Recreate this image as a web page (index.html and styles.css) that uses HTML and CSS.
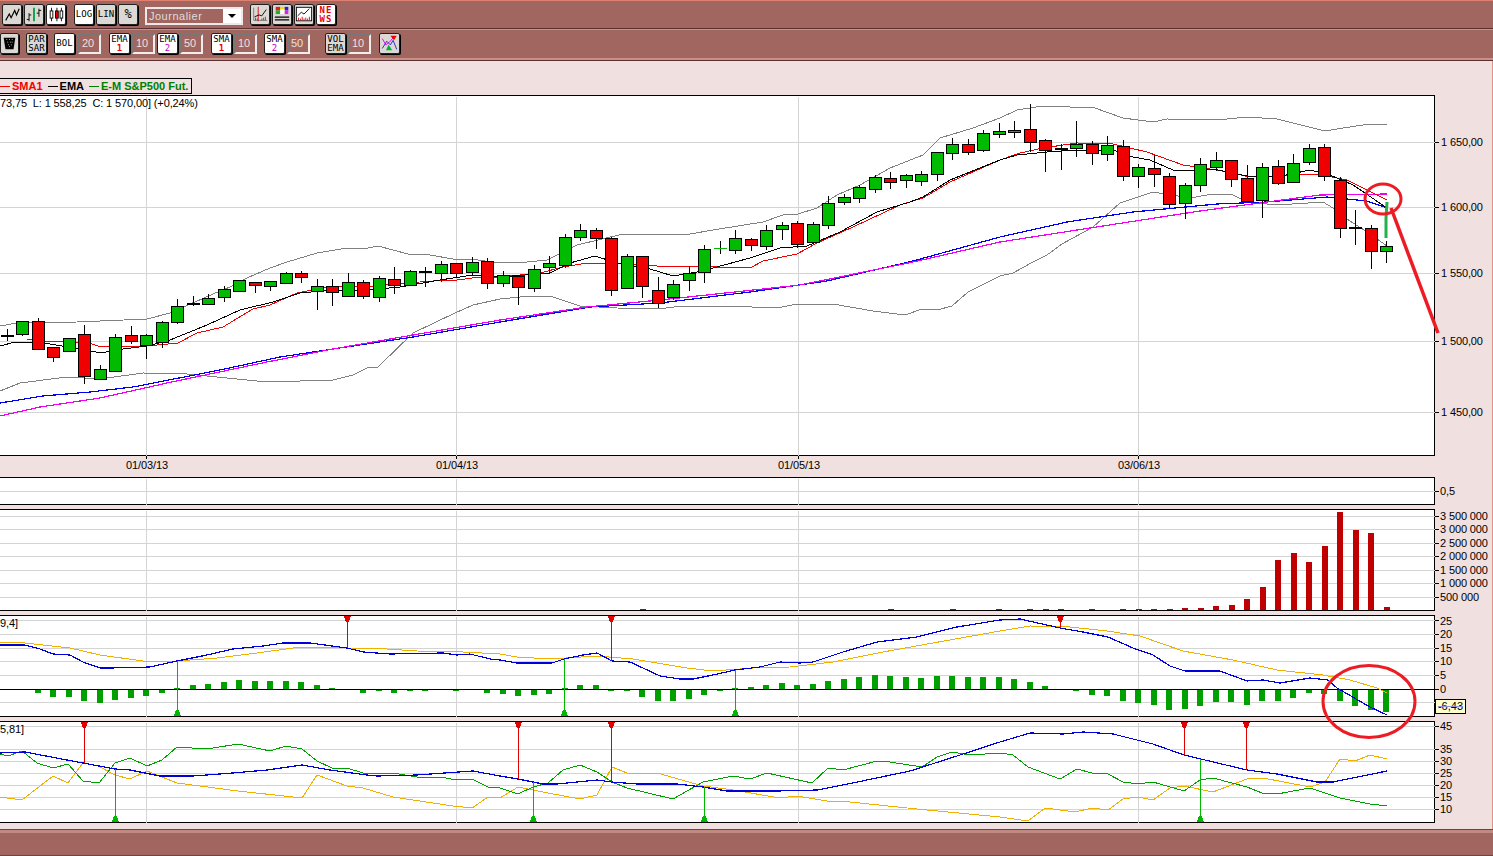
FILE: index.html
```html
<!doctype html>
<html lang="fr">
  <head>
    <meta charset="UTF-8" />
    <meta name="viewport" content="width=device-width, initial-scale=1.0" />
    <title>Graphique S&amp;P500 Fut.</title>
    <link rel="stylesheet" href="styles.css">
  </head>
  <body>
    <div id="app" class="window">
      <header class="toolbar">
        <div class="tool-row row-top">
          <div class="tool-group">
            <button class="btn grey"><svg viewBox="0 0 20 21"><polyline points="3,17 7,10 9,14 13,6 15,11 18,4" fill="none" stroke="#000" stroke-width="1.3"/></svg></button>
            <button class="btn grey"><svg viewBox="0 0 20 21"><path d="M4.5 9v9M2 16h2.5M4.5 11H7M15.5 4v9M13 9h2.5M15.5 6H18" stroke="#000" fill="none"/><rect x="9" y="3" width="2" height="15" fill="#00a040"/></svg></button>
            <button class="btn"><svg viewBox="0 0 20 21"><path d="M5 3v15M11 3v15M16 3v15" stroke="#000"/><rect x="3.5" y="6.5" width="3" height="8" fill="#fff" stroke="#000"/><rect x="9.5" y="6.5" width="3" height="8" fill="#f00000" stroke="#000"/><rect x="14.5" y="6.5" width="3" height="8" fill="#fff" stroke="#000"/></svg></button>
          </div>
          <div class="tool-group gap-b">
            <button class="btn">LOG</button>
            <button class="btn grey">LIN</button>
            <button class="btn grey pct">%</button>
          </div>
          <div class="period gap-s">
            <span class="period-value">Journalier</span>
            <span class="period-arrow"></span>
          </div>
          <div class="tool-group gap-s">
            <button class="btn grey"><svg viewBox="0 0 20 21"><path d="M3 17h15M3 3v14" stroke="#777" fill="none"/><path d="M8 2v16" stroke="#e00000"/><polyline points="4,13 9,11 12,12 17,5" fill="none" stroke="#000"/><path d="M5 17v-3M7 17v-2M12 17v-2M14 17v-3M16 17v-4" stroke="#555"/></svg></button>
            <button class="btn grey"><svg viewBox="0 0 20 21"><rect x="3" y="2" width="5" height="4" fill="#e02020"/><rect x="8" y="2" width="5" height="3" fill="#f0e000"/><rect x="13" y="2" width="4" height="4" fill="#2020e0"/><rect x="3" y="6" width="5" height="4" fill="#20b020"/><rect x="8" y="5" width="5" height="5" fill="#fff"/><rect x="13" y="6" width="4" height="4" fill="#e020e0"/><path d="M2 13.5h16M2 16.5h16" stroke="#000" stroke-width="1.4"/></svg></button>
            <button class="btn grey"><svg viewBox="0 0 20 21"><rect x="1.5" y="2.5" width="17" height="15" fill="#fff" stroke="#000"/><polyline points="3,12 7,8 10,10 16,4" fill="none" stroke="#000"/><path d="M4 17v-3M6 17v-2M8 17v-4M10 17v-2M12 17v-3M14 17v-2M16 17v-4" stroke="#e00000"/></svg></button>
            <button class="btn news"><span>NE</span><span>WS</span></button>
          </div>
        </div>
        <div class="tool-row row-bottom">
          <button class="btn grey narrow"><svg viewBox="0 0 19 21"><path d="M3 4h13l-2 13H5z" fill="#000"/><path d="M6 6h1M9 6h1M12 6h1M7 9h1M10 9h1M12 9h1M8 12h1M11 12h1M9 14h1" stroke="#ccc"/></svg></button>
          <button class="btn grey gap-s">PAR<br>SAR</button>
          <div class="tool-group wide gap-s">
            <button class="btn">BOL</button>
            <span class="num">20</span>
          </div>
          <div class="tool-group gap-b">
            <button class="btn">EMA<br><b class="c-red">1</b></button>
            <span class="num">10</span>
            <button class="btn">EMA<br><b class="c-pur">2</b></button>
            <span class="num">50</span>
          </div>
          <div class="tool-group gap-b">
            <button class="btn">SMA<br><b class="c-red">1</b></button>
            <span class="num">10</span>
          </div>
          <div class="tool-group gap-s">
            <button class="btn">SMA<br><b class="c-pur">2</b></button>
            <span class="num">50</span>
          </div>
          <div class="tool-group gap-x">
            <button class="btn grey">VOL<br>EMA</button>
            <span class="num">10</span>
          </div>
          <button class="btn grey gap-b"><svg viewBox="0 0 20 21"><polyline points="2,5 6,12 10,9 15,3" fill="none" stroke="#e000e0"/><polyline points="2,16 7,8 11,12 14,7 18,17" fill="none" stroke="#2020d0"/><polygon points="11,2 18,2 15,7" fill="#f00000"/><polygon points="6,18 13,18 9,12" fill="#00b040"/></svg></button>
        </div>
      </header>

      <main class="workspace">
        <div class="legend">
          <i class="dash first c-red-bg"></i><span class="c-red">SMA1</span>
          <i class="dash"></i><span>EMA</span>
          <i class="dash c-grn-bg"></i><span class="c-grn">E-M S&amp;P500 Fut.</span>
        </div>

        <svg id="pricePane" class="pane" width="1493" height="382" viewBox="0 95 1493 382">
          <g class="plot"></g>
          <text class="info" x="0" y="107">73,75  L: 1 558,25  C: 1 570,00] (+0,24%)</text>
          <text class="axis" x="1441" y="146">1 650,00</text>
          <text class="axis" x="1441" y="211">1 600,00</text>
          <text class="axis" x="1441" y="277">1 550,00</text>
          <text class="axis" x="1441" y="345">1 500,00</text>
          <text class="axis" x="1441" y="416">1 450,00</text>
          <text class="date" x="147" y="469">01/03/13</text>
          <text class="date" x="457" y="469">01/04/13</text>
          <text class="date" x="799" y="469">01/05/13</text>
          <text class="date" x="1139" y="469">03/06/13</text>
        </svg>

        <svg id="emptyPane" class="pane" width="1493" height="28" viewBox="0 477 1493 28">
          <g class="plot"></g>
          <text class="axis" x="1440" y="495">0,5</text>
        </svg>

        <svg id="volumePane" class="pane" width="1493" height="102" viewBox="0 509 1493 102">
          <g class="plot"></g>
          <text class="axis" x="1440" y="520">3 500 000</text>
          <text class="axis" x="1440" y="533">3 000 000</text>
          <text class="axis" x="1440" y="547">2 500 000</text>
          <text class="axis" x="1440" y="560">2 000 000</text>
          <text class="axis" x="1440" y="574">1 500 000</text>
          <text class="axis" x="1440" y="587">1 000 000</text>
          <text class="axis" x="1440" y="601">500 000</text>
        </svg>

        <svg id="macdPane" class="pane" width="1493" height="102" viewBox="0 615 1493 102">
          <g class="plot"></g>
          <text class="info" x="0" y="627">9,4]</text>
          <text class="axis" x="1440" y="625">25</text>
          <text class="axis" x="1440" y="638">20</text>
          <text class="axis" x="1440" y="652">15</text>
          <text class="axis" x="1440" y="665">10</text>
          <text class="axis" x="1440" y="679">5</text>
          <text class="axis" x="1440" y="693">0</text>
        </svg>

        <svg id="dmiPane" class="pane" width="1493" height="102" viewBox="0 721 1493 102">
          <g class="plot"></g>
          <text class="info" x="0" y="733">5,81]</text>
          <text class="axis" x="1440" y="730">45</text>
          <text class="axis" x="1440" y="753">35</text>
          <text class="axis" x="1440" y="765">30</text>
          <text class="axis" x="1440" y="777">25</text>
          <text class="axis" x="1440" y="789">20</text>
          <text class="axis" x="1440" y="801">15</text>
          <text class="axis" x="1440" y="813">10</text>
        </svg>

        <div class="value-tip">-6,43</div>
      </main>

      <footer class="statusbar"></footer>

      <!-- hand drawn marks on top of the chart -->
      <svg class="marks" width="1493" height="856" viewBox="0 0 1493 856">
        <polyline points="1386,238 1386,218 1387,202" fill="none" stroke="#22b14c" stroke-width="3"/>
        <ellipse cx="1383" cy="199" rx="18" ry="15" fill="none" stroke="#ed1c24" stroke-width="3"/>
        <line x1="1391" y1="208" x2="1438" y2="333" stroke="#ed1c24" stroke-width="3.5"/>
        <ellipse cx="1369" cy="701.5" rx="46" ry="36" fill="none" stroke="#ed1c24" stroke-width="3"/>
      </svg>
    </div>
    <script src="chart.js"></script>
  </body>
</html>
```

FILE: styles.css
```css
* {
  box-sizing: border-box;
}
html,
body {
  margin: 0;
  padding: 0;
  overflow: hidden;
}
.window {
  position: relative;
  width: 1493px;
  height: 856px;
  font-family: "Liberation Sans", Arial, sans-serif;
  background-color: #f0e0e0;
}

/* toolbars */
.toolbar {
  height: 61px;
  background-color: #a0665f;
  border-top: 1px solid #e08070;
  border-bottom: 1px solid #5a3030;
}
.tool-row {
  display: flex;
  align-items: center;
}
.row-top {
  height: 28px;
  padding: 1px 0 1px 2px;
  border-bottom: 1px solid #5a3030;
}
.row-bottom {
  height: 31px;
  padding-bottom: 1px;
  border-top: 1px solid #c89088;
  border-bottom: 2px solid #c89088;
}
.tool-group {
  display: flex;
  align-items: center;
  gap: 2px;
}
.tool-group.wide {
  gap: 3px;
}
.gap-s {
  margin-left: 7px;
}
.gap-b {
  margin-left: 8px;
}
.gap-x {
  margin-left: 15px;
}
.btn {
  width: 20px;
  height: 21px;
  padding: 0;
  border: 1px solid #222;
  border-radius: 2px;
  background-color: #fff;
  box-shadow: 1px 1px 0 #000;
  font-family: "DejaVu Sans Mono", "Liberation Mono", monospace;
  font-size: 9px;
  line-height: 9px;
  color: #000;
  text-align: center;
  overflow: hidden;
}
.btn svg {
  display: block;
  width: 100%;
  height: 100%;
}
.btn.grey {
  background-color: #dcd8d4;
}
.btn.narrow {
  width: 19px;
}
.btn.pct {
  font-size: 12px;
}
.btn b.c-pur {
  font-weight: normal;
}
.news {
  display: flex;
  flex-direction: column;
  justify-content: center;
  font-size: 9px;
  font-weight: bold;
  color: #f00000;
  letter-spacing: 1px;
}
.row-bottom .btn {
  width: 21px;
}
.row-bottom .btn.narrow {
  width: 19px;
}
.num {
  width: 23px;
  height: 20px;
  padding-left: 2px;
  border: 2px solid;
  border-color: #777 #eee #eee #777;
  font-size: 11px;
  line-height: 15px;
  color: #eee0dc;
}
.period {
  display: flex;
  align-items: center;
  justify-content: space-between;
  width: 98px;
  height: 18px;
  margin-top: 2px;
  border: 2px solid #f0e8e8;
  background-color: #fff;
}
.period-value {
  flex: 1;
  height: 100%;
  padding-left: 2px;
  background-color: #a0665f;
  font-size: 11px;
  line-height: 14px;
  color: #ddd;
  letter-spacing: 0.5px;
}
.period-arrow {
  width: 18px;
  height: 14px;
  position: relative;
}
.period-arrow::after {
  content: "";
  position: absolute;
  left: 5px;
  top: 5px;
  border-left: 4px solid transparent;
  border-right: 4px solid transparent;
  border-top: 4px solid #000;
}

/* chart area */
.workspace {
  position: relative;
  height: 768px;
  padding-top: 17px;
  border-right: 1px solid #e09088;
}
.legend {
  display: flex;
  align-items: center;
  width: 192px;
  height: 16px;
  margin-bottom: 1px;
  border: 1px solid #000;
  border-left: none;
  font-size: 11px;
  font-weight: bold;
  line-height: 14px;
  white-space: nowrap;
}
.dash {
  display: block;
  width: 10px;
  height: 1px;
  margin: 0 2px 0 5px;
  background-color: #000;
}
.dash.first {
  margin-left: 0;
}
.c-red {
  color: #f00000;
}
.c-pur {
  color: #c000c0;
}
.c-grn {
  color: #008000;
}
.c-red-bg {
  background-color: #f00000;
}
.c-grn-bg {
  background-color: #008000;
}
.pane {
  display: block;
  margin-bottom: 4px;
}
#pricePane {
  margin-bottom: 0;
}
.pane .plot {
  shape-rendering: crispEdges;
}
.pane text {
  font-family: "Liberation Sans", Arial, sans-serif;
  font-size: 11px;
  letter-spacing: -0.12px;
  fill: #000;
  white-space: pre;
}
.pane .date {
  text-anchor: middle;
}
.value-tip {
  position: absolute;
  left: 1435px;
  top: 638px;
  width: 31px;
  height: 15px;
  border: 1px solid #000;
  background-color: #ffffcc;
  font-size: 11px;
  line-height: 13px;
  text-align: center;
  text-decoration: line-through #9090e0;
}
.statusbar {
  height: 27px;
  background-color: #a0665f;
  border-top: 1px solid #6e443e;
  border-bottom: 1px solid #6e443e;
  box-shadow: inset 0 3px 0 #c08a82;
}
.marks {
  position: absolute;
  left: 0;
  top: 0;
  pointer-events: none;
}
```

FILE: chart.js
```js
// pixel data read off the chart, drawn in page coordinates
const NS = "http://www.w3.org/2000/svg";
const AXIS_X = 1434.5;
const DATE_X = [146.5, 456.5, 798.5, 1138.5];
const barX = (k) => Math.floor(146.5 + 15.5 * k);

// high, body top, body bottom, low, type - first one is k = -9
const candles = [
  [329, 336, 336, 341, "d"], [321, 321, 334, 336, "g"], [318, 321, 349, 349, "r"],
  [347, 347, 357, 362, "r"], [338, 338, 351, 351, "g"], [325, 334, 376, 384, "r"],
  [365, 369, 379, 379, "g"], [334, 337, 371, 371, "g"], [326, 335, 341, 344, "r"],
  [334, 335, 345, 359, "g"], [321, 322, 342, 348, "g"], [299, 306, 322, 324, "g"],
  [296, 304, 304, 306, "d"], [294, 298, 304, 304, "g"], [286, 289, 297, 302, "g"],
  [280, 280, 291, 291, "g"], [282, 282, 285, 293, "r"], [281, 281, 286, 291, "g"],
  [272, 273, 283, 283, "g"], [271, 273, 277, 283, "r"], [279, 286, 291, 310, "g"],
  [279, 286, 292, 306, "r"], [273, 282, 296, 297, "g"], [280, 282, 296, 299, "r"],
  [276, 278, 297, 302, "g"], [267, 279, 285, 294, "r"], [270, 271, 285, 285, "g"],
  [267, 272, 272, 287, "d"], [261, 264, 273, 282, "g"], [263, 263, 273, 278, "r"],
  [257, 262, 272, 275, "g"], [258, 261, 283, 289, "r"], [271, 275, 283, 287, "g"],
  [276, 276, 287, 305, "r"], [265, 269, 288, 292, "g"], [256, 263, 267, 274, "g"],
  [234, 237, 265, 268, "g"], [224, 230, 237, 241, "g"], [228, 230, 238, 249, "r"],
  [237, 238, 290, 296, "r"], [254, 256, 288, 288, "g"], [256, 256, 286, 298, "r"],
  [277, 290, 303, 308, "r"], [280, 284, 297, 300, "g"], [266, 273, 280, 291, "g"],
  [245, 249, 272, 283, "g"], [241, 249, 249, 254, "e"], [230, 238, 250, 254, "g"],
  [238, 239, 245, 251, "r"], [225, 230, 246, 250, "g"], [222, 225, 229, 240, "g"],
  [221, 223, 244, 248, "r"], [222, 224, 242, 242, "g"], [196, 203, 225, 229, "g"],
  [194, 197, 202, 205, "g"], [185, 187, 198, 203, "g"], [175, 177, 189, 193, "g"],
  [172, 178, 182, 189, "r"], [174, 175, 180, 188, "g"], [171, 174, 181, 186, "g"],
  [152, 152, 174, 181, "g"], [138, 144, 153, 160, "g"], [139, 144, 152, 155, "r"],
  [130, 133, 150, 152, "g"], [123, 131, 134, 138, "g"], [121, 130, 132, 138, "g"],
  [104, 129, 142, 152, "r"], [139, 140, 150, 172, "r"], [144, 149, 149, 170, "d"],
  [121, 144, 148, 157, "g"], [141, 144, 153, 165, "r"], [136, 145, 154, 161, "g"],
  [140, 146, 176, 181, "r"], [164, 167, 176, 188, "g"], [155, 168, 174, 187, "r"],
  [173, 176, 204, 208, "r"], [183, 185, 203, 219, "g"], [158, 164, 185, 192, "g"],
  [152, 160, 167, 171, "g"], [160, 160, 179, 187, "r"], [165, 178, 201, 202, "r"],
  [163, 167, 200, 218, "g"], [160, 166, 183, 185, "r"], [154, 163, 182, 183, "g"],
  [144, 148, 162, 165, "g"], [144, 147, 176, 181, "r"], [177, 180, 228, 238, "r"],
  [210, 228, 228, 245, "d"], [225, 228, 251, 269, "r"], [241, 246, 251, 263, "g"],
];

const upperBand = [[0, 326], [17, 323], [77, 322], [147, 319], [170, 313], [213, 294], [230, 287], [247, 278], [270, 268], [287, 262], [317, 253], [347, 248], [363, 249], [378, 246], [408, 254], [430, 255], [453, 259], [470, 259], [493, 262], [517, 263], [547, 260], [577, 245], [623, 234], [690, 234], [713, 230], [763, 222], [783, 215], [798, 214], [817, 208], [837, 195], [860, 185], [890, 168], [923, 155], [940, 138], [973, 128], [1000, 118], [1017, 110], [1043, 106], [1070, 107], [1092, 107], [1123, 118], [1153, 122], [1167, 119], [1217, 120], [1247, 117], [1277, 119], [1325, 131], [1343, 128], [1370, 124], [1387, 125]];
const lowerBand = [[0, 391], [20, 383], [67, 377], [100, 379], [143, 373], [187, 374], [267, 382], [333, 380], [353, 375], [367, 368], [378, 367], [413, 333], [455, 313], [473, 305], [500, 299], [520, 297], [550, 296], [580, 306], [617, 308], [657, 309], [683, 306], [727, 306], [777, 308], [797, 304], [833, 304], [873, 311], [905, 315], [922, 309], [937, 310], [952, 306], [968, 292], [1000, 276], [1013, 273], [1033, 262], [1047, 255], [1062, 244], [1093, 227], [1120, 203], [1153, 192], [1190, 198], [1213, 194], [1233, 195], [1247, 202], [1277, 205], [1323, 202], [1333, 208], [1347, 219], [1367, 232], [1387, 246]];
const smaLine = [[27, 339], [43, 341], [62, 341], [92, 344], [98, 346], [133, 346], [147, 346], [178, 343], [197, 333], [223, 327], [253, 309], [270, 305], [297, 293], [333, 286], [367, 287], [393, 284], [433, 281], [457, 280], [480, 277], [500, 277], [540, 273], [563, 267], [587, 263], [607, 263], [657, 266], [700, 266], [717, 267], [752, 267], [763, 261], [797, 254], [817, 243], [853, 227], [900, 205], [923, 198], [950, 182], [1000, 160], [1020, 153], [1043, 148], [1077, 143], [1113, 144], [1147, 152], [1183, 165], [1217, 170], [1250, 177], [1277, 176], [1317, 174], [1347, 180], [1367, 190], [1387, 200]];
const emaLine = [[0, 346], [15, 342], [50, 344], [87, 350], [100, 353], [123, 349], [147, 346], [170, 340], [207, 325], [240, 310], [273, 302], [300, 293], [333, 290], [367, 290], [400, 287], [440, 280], [473, 275], [500, 277], [550, 273], [570, 263], [595, 256], [617, 263], [650, 269], [673, 276], [697, 272], [713, 268], [750, 258], [780, 248], [807, 246], [840, 232], [877, 212], [910, 202], [923, 197], [950, 180], [1000, 160], [1017, 155], [1047, 152], [1077, 150], [1113, 150], [1133, 157], [1150, 160], [1173, 170], [1193, 171], [1213, 169], [1247, 176], [1277, 177], [1310, 170], [1330, 175], [1353, 185], [1387, 208]];
const longBlue = [[0, 403], [43, 396], [90, 392], [133, 387], [220, 370], [280, 357], [333, 349], [413, 337], [500, 322], [590, 307], [660, 303], [750, 292], [827, 281], [913, 261], [1000, 237], [1067, 222], [1133, 212], [1217, 204], [1267, 202], [1327, 197], [1347, 199], [1367, 201], [1387, 208]];
const longPink = [[0, 416], [40, 407], [100, 398], [167, 383], [267, 362], [333, 349], [413, 335], [500, 320], [587, 307], [660, 300], [800, 285], [913, 262], [1000, 242], [1090, 228], [1200, 211], [1267, 202], [1320, 195], [1387, 194]];

const volumes = [[643, 609], [891, 609], [953, 609], [999, 609], [1030, 609], [1046, 609], [1061, 609], [1092, 609], [1123, 609], [1139, 609], [1154, 609], [1170, 609], [1185, 608], [1201, 608], [1216, 606], [1232, 605], [1247, 599], [1263, 587], [1278, 560], [1294, 553], [1309, 562], [1325, 546], [1340, 512], [1356, 530], [1371, 533], [1387, 607]];

const macdBlue = [[0, 645], [25, 645], [40, 649], [53, 654], [70, 655], [83, 662], [100, 668], [110, 668], [150, 667], [177, 661], [207, 655], [233, 649], [263, 646], [283, 643], [310, 643], [347, 648], [363, 652], [390, 654], [443, 653], [457, 655], [470, 654], [490, 659], [500, 660], [517, 663], [552, 663], [564, 659], [583, 655], [597, 653], [612, 661], [630, 662], [643, 668], [660, 676], [680, 679], [693, 679], [713, 675], [735, 670], [760, 667], [780, 662], [800, 663], [813, 662], [843, 652], [877, 642], [917, 637], [957, 627], [1000, 620], [1020, 619], [1060, 628], [1083, 632], [1108, 637], [1133, 648], [1153, 655], [1170, 666], [1185, 671], [1220, 671], [1247, 681], [1263, 680], [1280, 683], [1310, 678], [1328, 680], [1337, 688], [1370, 707], [1387, 715]];
const macdOrange = [[0, 642], [25, 643], [70, 648], [100, 655], [143, 661], [177, 661], [217, 658], [257, 653], [293, 648], [320, 647], [347, 648], [387, 649], [417, 651], [463, 652], [500, 654], [517, 657], [550, 659], [597, 656], [633, 659], [687, 668], [713, 671], [753, 668], [790, 667], [833, 662], [883, 652], [933, 643], [1000, 631], [1030, 626], [1070, 627], [1107, 631], [1140, 636], [1183, 651], [1233, 660], [1277, 670], [1323, 675], [1350, 680], [1377, 688], [1387, 693]];
// histogram, first bar is k = -7, positive goes below the zero line
const macdBars = [3, 7, 7, 11, 13, 10, 8, 6, 3, -1, -4, -5, -7, -9, -8, -8, -8, -7, -4, -1, 0, 3, 1, 3, 1, 1, 0, 1, 0, 3, 4, 6, 5, 4, -1, -4, -4, 1, 1, 7, 11, 11, 9, 5, 1, -1, -2, -4, -6, -4, -5, -8, -10, -12, -14, -13, -12, -11, -13, -13, -12, -12, -12, -10, -7, -3, 0, 1, 5, 6, 11, 13, 15, 20, 19, 16, 12, 12, 15, 11, 11, 8, 3, 4, 11, 16, 20, 22];

const dmiBlue = [[0, 753], [25, 752], [67, 760], [83, 763], [115, 769], [130, 770], [150, 774], [160, 776], [193, 776], [233, 773], [267, 770], [302, 765], [330, 770], [367, 775], [377, 776], [417, 775], [473, 771], [500, 776], [518, 779], [533, 782], [543, 784], [557, 784], [597, 780], [612, 782], [637, 784], [677, 784], [703, 787], [727, 791], [777, 791], [817, 790], [843, 785], [910, 771], [957, 756], [1000, 742], [1030, 733], [1063, 734], [1083, 732], [1113, 734], [1153, 744], [1184, 755], [1247, 770], [1277, 774], [1317, 782], [1333, 782], [1387, 771]];
const dmiGreen = [[0, 754], [8, 756], [22, 751], [37, 763], [53, 768], [68, 764], [83, 781], [99, 783], [115, 763], [130, 758], [147, 766], [162, 760], [177, 747], [207, 749], [238, 744], [270, 751], [286, 746], [302, 749], [317, 761], [332, 768], [347, 768], [363, 773], [393, 773], [423, 778], [440, 777], [457, 780], [472, 779], [488, 787], [500, 788], [518, 794], [533, 787], [548, 783], [563, 770], [580, 765], [597, 772], [612, 782], [627, 788], [673, 799], [703, 782], [733, 776], [750, 779], [767, 773], [812, 783], [828, 768], [843, 770], [877, 761], [890, 762], [922, 767], [937, 757], [952, 752], [970, 755], [1000, 753], [1013, 755], [1028, 767], [1060, 779], [1077, 769], [1092, 773], [1108, 774], [1123, 782], [1138, 784], [1153, 782], [1184, 791], [1200, 780], [1213, 778], [1247, 787], [1262, 793], [1277, 794], [1310, 788], [1340, 798], [1370, 804], [1387, 806]];
const dmiOrange = [[0, 797], [22, 800], [53, 776], [68, 783], [83, 763], [98, 766], [115, 775], [130, 779], [147, 771], [177, 783], [238, 791], [302, 798], [317, 775], [347, 786], [363, 788], [393, 797], [453, 806], [472, 808], [488, 797], [500, 798], [518, 787], [548, 793], [580, 799], [597, 795], [612, 767], [627, 773], [657, 773], [703, 786], [733, 790], [780, 798], [797, 796], [827, 801], [850, 802], [917, 809], [1000, 817], [1028, 821], [1045, 808], [1075, 812], [1092, 808], [1108, 810], [1123, 799], [1138, 797], [1153, 800], [1170, 788], [1184, 786], [1213, 792], [1247, 779], [1263, 778], [1310, 787], [1325, 782], [1340, 759], [1355, 761], [1370, 755], [1387, 759]];

function add(parent, tag, attrs) {
  const node = document.createElementNS(NS, tag);
  for (const key in attrs) {
    node.setAttribute(key, attrs[key]);
  }
  parent.appendChild(node);
  return node;
}

function plotOf(id) {
  return document.querySelector("#" + id + " .plot");
}

function drawFrame(plot, top, bottom, gridY) {
  add(plot, "rect", { x: -2, y: top, width: AXIS_X + 2, height: bottom - top, fill: "#fff", stroke: "#000" });
  gridY.forEach((y) => {
    add(plot, "line", { x1: 0, x2: AXIS_X, y1: y, y2: y, stroke: "#d4d4d4" });
    add(plot, "line", { x1: AXIS_X, x2: AXIS_X + 4, y1: y, y2: y, stroke: "#000" });
  });
  DATE_X.forEach((x) => {
    add(plot, "line", { x1: x, x2: x, y1: top + 1, y2: bottom, stroke: "#d4d4d4" });
  });
}

function drawLine(plot, points, color, width) {
  add(plot, "polyline", {
    points: points.map((p) => p.join(",")).join(" "),
    fill: "none",
    stroke: color,
    "stroke-width": width || 1,
  });
}

function drawCandles(plot) {
  candles.forEach((c, i) => {
    const x = barX(i - 9);
    const [high, top, bottom, low, kind] = c;
    add(plot, "line", { x1: x + 0.5, x2: x + 0.5, y1: high, y2: low, stroke: "#000" });
    if (kind === "d" || kind === "e") {
      add(plot, "rect", { x: x - 6, y: top - 1, width: 13, height: kind === "d" ? 2 : 1, fill: kind === "d" ? "#000" : "#00b800" });
      return;
    }
    add(plot, "rect", {
      x: x - 5.5,
      y: top + 0.5,
      width: 12,
      height: bottom - top,
      fill: kind === "g" ? "#00bb00" : "#f00000",
      stroke: "#000",
    });
  });
}

function drawSignal(plot, x, tip, edge, isSell) {
  const color = isSell ? "#e00000" : "#00b800";
  add(plot, "line", { x1: x + 0.5, x2: x + 0.5, y1: tip, y2: edge, stroke: color });
  const dir = isSell ? 1 : -1;
  const head = [[x - 3, edge], [x + 4, edge], [x + 2, edge + 6 * dir], [x - 1, edge + 6 * dir]];
  add(plot, "polygon", { points: head.map((p) => p.join(",")).join(" "), fill: color });
}

// price pane
const price = plotOf("pricePane");
drawFrame(price, 95.5, 455.5, [142.5, 207.5, 273.5, 341.5, 412.5]);
DATE_X.forEach((x) => {
  add(price, "line", { x1: x, x2: x, y1: 456, y2: 459, stroke: "#000" });
});
drawLine(price, upperBand, "#808080");
drawLine(price, lowerBand, "#808080");
drawLine(price, longBlue, "#0000f0", 1.2);
drawLine(price, longPink, "#f000f0", 1.2);
drawLine(price, smaLine, "#f00000");
drawLine(price, emaLine, "#000");
drawCandles(price);

drawFrame(plotOf("emptyPane"), 477.5, 504.5, [491.5]);

// volume pane
const volume = plotOf("volumePane");
drawFrame(volume, 509.5, 610.5, [516.5, 529.5, 543.5, 556.5, 570.5, 583.5, 597.5]);
volumes.forEach(([x, top]) => {
  add(volume, "rect", { x: x - 3, y: top, width: 6, height: 610 - top, fill: "#c00000" });
});

// macd pane
const macd = plotOf("macdPane");
drawFrame(macd, 615.5, 716.5, [620.5, 634.5, 648.5, 661.5, 675.5, 702.5]);
macdBars.forEach((v, i) => {
  if (v === 0) return;
  const x = barX(i - 7);
  add(macd, "rect", { x: x - 3, y: v > 0 ? 690 : 689 + v, width: 6, height: Math.abs(v), fill: "#00a000" });
});
add(macd, "line", { x1: 0, x2: AXIS_X + 4, y1: 689.5, y2: 689.5, stroke: "#000" });
drawLine(macd, macdOrange, "#f0b000");
drawLine(macd, macdBlue, "#0000d8", 1.2);
[[347, 648], [611, 661], [1060, 628]].forEach(([x, y]) => drawSignal(macd, x, y, 616, true));
[[177, 661], [564, 659], [735, 670]].forEach(([x, y]) => drawSignal(macd, x, y, 716, false));

// dmi pane
const dmi = plotOf("dmiPane");
drawFrame(dmi, 721.5, 822.5, [726.5, 749.5, 761.5, 773.5, 785.5, 797.5, 809.5]);
drawLine(dmi, dmiOrange, "#f0b000");
drawLine(dmi, dmiGreen, "#00a000");
drawLine(dmi, dmiBlue, "#0000d8", 1.2);
[[84, 763], [518, 779], [611, 782], [1184, 755], [1246, 770]].forEach(([x, y]) => drawSignal(dmi, x, y, 722, true));
[[115, 769], [533, 782], [704, 787], [1200, 759]].forEach(([x, y]) => drawSignal(dmi, x, y, 822, false));
```
